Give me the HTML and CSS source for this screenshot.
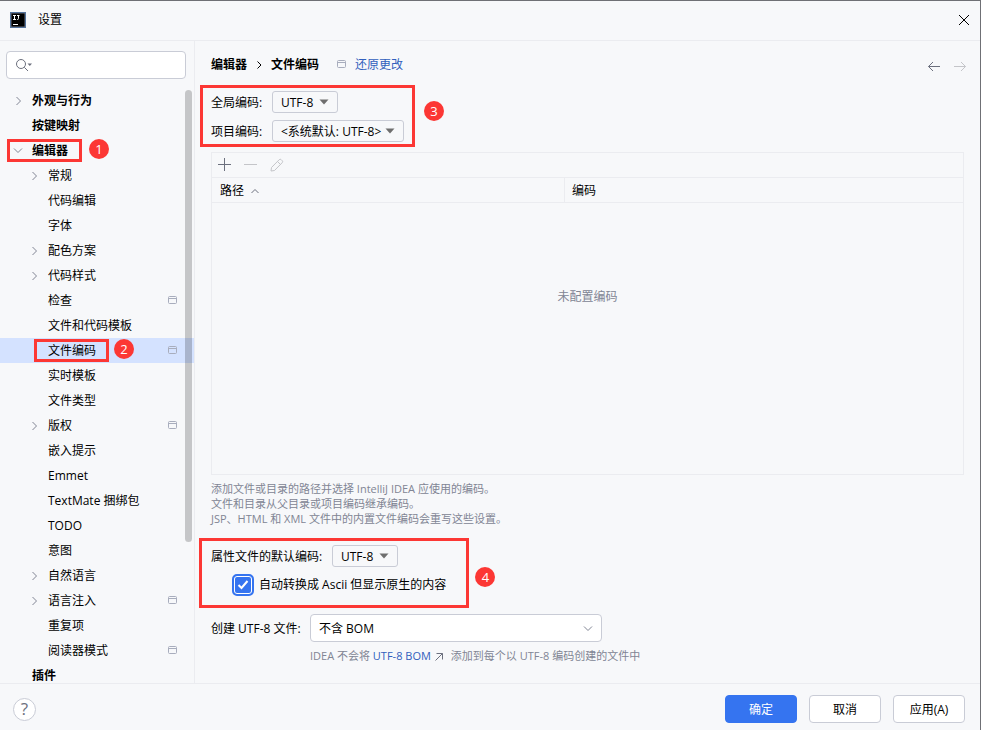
FILE: index.html
```html
<!DOCTYPE html>
<html lang="zh-CN">
<head>
    <meta charset="UTF-8">
    <meta name="viewport" content="width=device-width, initial-scale=1.0">
    <title>设置</title>
    <link rel="stylesheet" href="styles.css">
</head>
<body>
    <!-- shared icons -->
    <svg class="sprite" aria-hidden="true">
        <symbol id="chevron-right" viewBox="0 0 10 10"><path d="M3.500 1l4 4-4 4" /></symbol>
        <symbol id="chevron-down" viewBox="0 0 10 10"><path d="M1 2.500l4 4 4-4" /></symbol>
        <symbol id="project" viewBox="0 0 10 10"><rect x="0.500" y="0.500" width="8" height="7" rx="1" /><path d="M0.500 2.500h8" /></symbol>
        <symbol id="triangle" viewBox="0 0 10 6"><path d="M0.500 0.500h9L5 5.500z" /></symbol>
    </svg>

    <div class="window">
        <header class="titlebar">
            <svg class="logo" width="16" height="16" viewBox="0 0 16 16">
                <rect width="16" height="16" fill="#087cfa" />
                <rect x="1" y="1" width="14" height="14" fill="#000" />
                <path d="M3 3.500h3M4.500 3.500v4M3 7.500h3M7 3.500h2.500M8.500 3.500v3q0 1-1 1H7M3 12.500h5" fill="none" stroke="#fff" />
            </svg>
            <h1>设置</h1>
            <button class="close" aria-label="关闭">
                <svg width="12" height="12" viewBox="0 0 12 12"><path d="M1 1l10 10M11 1L1 11" /></svg>
            </button>
        </header>

        <div class="body">
            <aside class="sidebar">
                <div class="search">
                    <input type="text" aria-label="搜索设置">
                    <svg width="18" height="14" viewBox="0 0 18 14">
                        <circle cx="6" cy="6" r="4.500" />
                        <path d="M9.300 9.300l3.700 3.700" />
                        <path d="M12.500 5.500h4.500l-2.200 2.500z" class="solid" />
                    </svg>
                </div>
                <nav class="tree">
                    <ul>
                        <li class="top"><svg class="icon"><use href="#chevron-right" /></svg><a href="#">外观与行为</a></li>
                        <li class="top"><a href="#">按键映射</a></li>
                        <li class="top marked"><svg class="icon"><use href="#chevron-down" /></svg><a href="#">编辑器</a><span class="badge">1</span></li>
                        <li><svg class="icon"><use href="#chevron-right" /></svg><a href="#">常规</a></li>
                        <li><a href="#">代码编辑</a></li>
                        <li><a href="#">字体</a></li>
                        <li><svg class="icon"><use href="#chevron-right" /></svg><a href="#">配色方案</a></li>
                        <li><svg class="icon"><use href="#chevron-right" /></svg><a href="#">代码样式</a></li>
                        <li><a href="#">检查</a><svg class="project"><use href="#project" /></svg></li>
                        <li><a href="#">文件和代码模板</a></li>
                        <li class="selected marked"><a href="#">文件编码</a><span class="badge">2</span><svg class="project"><use href="#project" /></svg></li>
                        <li><a href="#">实时模板</a></li>
                        <li><a href="#">文件类型</a></li>
                        <li><svg class="icon"><use href="#chevron-right" /></svg><a href="#">版权</a><svg class="project"><use href="#project" /></svg></li>
                        <li><a href="#">嵌入提示</a></li>
                        <li><a href="#">Emmet</a></li>
                        <li><a href="#">TextMate 捆绑包</a></li>
                        <li><a href="#">TODO</a></li>
                        <li><a href="#">意图</a></li>
                        <li><svg class="icon"><use href="#chevron-right" /></svg><a href="#">自然语言</a></li>
                        <li><svg class="icon"><use href="#chevron-right" /></svg><a href="#">语言注入</a><svg class="project"><use href="#project" /></svg></li>
                        <li><a href="#">重复项</a></li>
                        <li><a href="#">阅读器模式</a><svg class="project"><use href="#project" /></svg></li>
                        <li class="top"><a href="#">插件</a></li>
                    </ul>
                    <div class="scrollbar"></div>
                </nav>
            </aside>

            <main class="content">
                <div class="crumbs">
                    <b>编辑器</b>
                    <svg class="separator" width="6" height="8" viewBox="0 0 6 8"><path d="M1.500 0.500L5 4 1.500 7.500" /></svg>
                    <b>文件编码</b>
                    <svg class="project"><use href="#project" /></svg>
                    <a href="#">还原更改</a>
                    <div class="history">
                        <button aria-label="后退"><svg width="14" height="12" viewBox="0 0 14 12"><path d="M13 6.500H1.500M6 2L1.500 6.500 6 11" /></svg></button>
                        <button aria-label="前进" disabled><svg width="14" height="12" viewBox="0 0 14 12"><path d="M1 6.500h11.500M8 2L12.500 6.500 8 11" /></svg></button>
                    </div>
                </div>

                <div class="step">
                    <div class="frame">
                        <div class="field">
                            <label for="global">全局编码:</label>
                            <div class="dropdown">
                                <select id="global"><option>UTF-8</option></select>
                                <svg class="triangle"><use href="#triangle" /></svg>
                            </div>
                        </div>
                        <div class="field">
                            <label for="project-enc">项目编码:</label>
                            <div class="dropdown wide">
                                <select id="project-enc"><option>&lt;系统默认: UTF-8&gt;</option></select>
                                <svg class="triangle"><use href="#triangle" /></svg>
                            </div>
                        </div>
                    </div>
                    <span class="badge">3</span>
                </div>

                <div class="panel">
                    <div class="toolbar">
                        <button aria-label="添加"><svg width="14" height="14" viewBox="0 0 14 14"><path d="M0 6.500h13M6.500 0v13" /></svg></button>
                        <button aria-label="移除" disabled><svg width="14" height="14" viewBox="0 0 14 14"><path d="M0 6.500h13" /></svg></button>
                        <button aria-label="编辑" disabled><svg width="14" height="14" viewBox="0 0 14 14"><path d="M1 13l0.500-3.500 7.700-7.800q1-1 2 0l1 1q1 1 0 2L4.500 12.500zM7.500 3.500l3 3" /></svg></button>
                    </div>
                    <table>
                        <thead>
                            <tr>
                                <th>路径 <svg width="8" height="6" viewBox="0 0 8 6"><path d="M0.500 5L4 1.500 7.500 5" /></svg></th>
                                <th>编码</th>
                            </tr>
                        </thead>
                        <tbody>
                            <tr><td colspan="2">未配置编码</td></tr>
                        </tbody>
                    </table>
                </div>

                <p class="hint">添加文件或目录的路径并选择 IntelliJ IDEA 应使用的编码。<br>文件和目录从父目录或项目编码继承编码。<br>JSP、HTML 和 XML 文件中的内置文件编码会重写这些设置。</p>

                <div class="step properties">
                    <div class="frame">
                        <div class="field">
                            <label for="props">属性文件的默认编码:</label>
                            <div class="dropdown">
                                <select id="props"><option>UTF-8</option></select>
                                <svg class="triangle"><use href="#triangle" /></svg>
                            </div>
                        </div>
                        <label class="check">
                            <span class="tick">
                                <input type="checkbox" checked>
                                <svg width="12" height="10" viewBox="0 0 12 10"><path d="M1.500 5l3 3 6-7" /></svg>
                            </span>
                            自动转换成 Ascii 但显示原生的内容
                        </label>
                    </div>
                    <span class="badge">4</span>
                </div>

                <div class="bom">
                    <label for="bom">创建 UTF-8 文件:</label>
                    <div class="dropdown large">
                        <select id="bom"><option>不含 BOM</option></select>
                        <svg class="icon"><use href="#chevron-down" /></svg>
                    </div>
                    <p class="hint">IDEA 不会将 <a href="#">UTF-8 BOM</a><svg width="8" height="8" viewBox="0 0 8 8"><path d="M0.500 7.500l7-7M1.500 0.500h6v6" /></svg>添加到每个以 UTF-8 编码创建的文件中</p>
                </div>
            </main>
        </div>

        <footer class="footer">
            <button class="help" aria-label="帮助">?</button>
            <button class="btn primary">确定</button>
            <button class="btn">取消</button>
            <button class="btn">应用(A)</button>
        </footer>
    </div>
</body>
</html>
```

FILE: styles.css
```css
*, *::after {
    box-sizing: border-box;
}

body {
    margin: 0;
    font-family: "Open Sans", "Noto Sans CJK SC", sans-serif;
    font-size: 12px;
    line-height: 16px;
    color: #000;
    background: #f7f8fa;
}

svg {
    flex: none;
    fill: none;
    stroke: #6c707e;
}

a {
    color: #315fbd;
    text-decoration: none;
}

button, input, select {
    font: inherit;
    color: inherit;
}

button {
    padding: 0;
    border: none;
    background: none;
}

.sprite {
    position: absolute;
    width: 0;
    height: 0;
}

.icon, .project {
    width: 10px;
    height: 10px;
}

.icon {
    stroke: #818594;
}

.project {
    stroke: #a8adbd;
}

.window {
    display: flex;
    flex-direction: column;
    height: 100vh;
    border-top: 1px solid #6f7075;
    border-right: 1px solid #6f7075;
}

.titlebar {
    display: flex;
    align-items: center;
    height: 40px;
    padding: 0 10px 1px;
    border-bottom: 1px solid #ebecf0;
}

    .titlebar h1 {
        margin: 0 auto 0 12px;
        font-size: 12px;
        font-weight: normal;
    }

.close {
    display: flex;
}

    .close svg {
        stroke: #000;
    }

.body {
    display: flex;
    flex: 1;
    min-height: 0;
}

/* left side */
.sidebar {
    display: flex;
    flex-direction: column;
    flex: none;
    width: 195px;
    border-right: 1px solid #ebecf0;
}

.search {
    position: relative;
    padding: 10px 8px 9px 6px;
}

    .search input {
        display: block;
        width: 100%;
        height: 28px;
        padding: 0 8px 0 32px;
        border: 1px solid #c9ccd6;
        border-radius: 4px;
        background: #fff;
    }

    .search svg {
        position: absolute;
        left: 15px;
        top: 17px;
    }

    .search .solid {
        fill: #6c707e;
        stroke: none;
    }

.tree {
    position: relative;
    flex: 1;
    min-height: 0;
    overflow: hidden;
}

    .tree ul {
        margin: 0;
        padding: 0;
        list-style: none;
    }

    .tree li {
        position: relative;
        display: flex;
        align-items: center;
        height: 25px;
        padding: 0 16px 0 48px;
    }

    .tree a {
        color: #000;
    }

    .tree .top {
        padding-left: 32px;
        font-weight: bold;
    }

    .tree .icon {
        margin: 0 9px 0 -19px;
    }

    .tree .project {
        margin-left: auto;
    }

    .tree .selected {
        background: #d4e2ff;
    }

    .tree .badge {
        margin: 0 0 3px 18px;
    }

    .tree .top .badge {
        margin-left: 21px;
    }

    /* red outline around a tree item */
    .tree .marked::after {
        content: "";
        position: absolute;
        left: 34px;
        top: 1px;
        width: 75px;
        height: 23px;
        border: 3px solid #fc3734;
    }

    .tree .top.marked::after {
        left: 7px;
    }

.scrollbar {
    position: absolute;
    top: 2px;
    right: 2px;
    width: 7px;
    height: 76%;
    border-radius: 4px;
    background: rgba(0, 0, 0, 0.2);
}

.badge {
    flex: none;
    width: 20px;
    height: 20px;
    border-radius: 50%;
    background: #fc3734;
    color: #fff;
    font-size: 13px;
    font-weight: normal;
    line-height: 20px;
    text-align: center;
}

/* right side */
.content {
    display: flex;
    flex-direction: column;
    flex: 1;
    min-width: 0;
    padding: 0 16px 19px;
}

.crumbs {
    display: flex;
    align-items: center;
    flex: none;
    height: 44px;
    padding-top: 3px;
}

    .crumbs .separator {
        margin: 0 9px;
        stroke: #000;
    }

    .crumbs .project {
        margin: 0 8px 0 18px;
    }

.history {
    display: flex;
    gap: 12px;
    margin: 2px -3px 0 auto;
}

    .history button {
        display: flex;
    }

button:disabled svg {
    stroke: #c4c5c9;
}

.step {
    display: flex;
    align-items: center;
    flex: none;
    gap: 9px;
    margin-left: -11px;
}

.frame {
    display: flex;
    flex-direction: column;
    gap: 7px;
    padding: 3px 8px 2px;
    border: 3px solid #fc3734;
}

.step .badge {
    margin-top: -10px;
}

.field {
    display: flex;
    align-items: center;
}

    .field label {
        width: 61px;
        padding-top: 2px;
    }

.dropdown {
    position: relative;
    width: 66px;
}

    .dropdown select {
        display: block;
        appearance: none;
        width: 100%;
        height: 22px;
        padding: 2px 8px 0;
        border: 1px solid #c9ccd6;
        border-radius: 3px;
        background: #f7f8fa;
    }

    .dropdown svg {
        position: absolute;
        right: 9px;
        top: 8px;
        pointer-events: none;
    }

.triangle {
    width: 10px;
    height: 6px;
    fill: #6e6e6e;
    stroke: none;
}

.wide {
    width: 132px;
}

.large {
    width: 292px;
}

    .dropdown.large select {
        height: 28px;
        border-radius: 4px;
        background: #fff;
    }

    .dropdown.large svg {
        top: 10px;
    }

.panel {
    display: flex;
    flex-direction: column;
    flex: 1;
    margin-top: 5px;
    border: 1px solid #ebecf0;
}

.toolbar {
    display: flex;
    gap: 12px;
    height: 25px;
    padding: 0 6px;
    border-bottom: 1px solid #ebecf0;
}

    .toolbar button {
        display: flex;
        align-items: center;
    }

table {
    width: 100%;
    border-collapse: separate;
    border-spacing: 0;
}

th {
    width: 53%;
    height: 25px;
    padding: 2px 7px 0;
    border-bottom: 1px solid #ebecf0;
    font-weight: normal;
    text-align: left;
}

    th:first-child {
        width: 47%;
        padding-left: 8px;
        border-right: 1px solid #ebecf0;
    }

    th svg {
        margin: 0 0 1px 4px;
    }

td {
    padding: 86px 8px 0;
    color: #818594;
    text-align: center;
}

.hint {
    margin: 6px 0 0;
    font-size: 11px;
    line-height: 15px;
    color: #818594;
}

    .hint svg {
        margin: 0 8px 0 4px;
        vertical-align: -1px;
    }

.properties {
    gap: 6px;
    margin: 12px 0 0 -12px;
}

    .properties .frame {
        padding: 4px 20px 9px 9px;
    }

    .properties .field label {
        width: 121px;
    }

    .properties .badge {
        margin-top: 8px;
    }

.check {
    display: flex;
    align-items: center;
    gap: 5px;
    margin-left: 21px;
}

.tick {
    display: grid;
    place-items: center;
}

    .tick input, .tick svg {
        grid-area: 1 / 1;
    }

    .tick input {
        appearance: none;
        width: 22px;
        height: 22px;
        margin: 0;
        border: 2px solid #3574f0;
        border-radius: 5px;
        background: #3574f0;
        box-shadow: inset 0 0 0 1px #fff;
    }

    .tick svg {
        stroke: #fff;
        stroke-width: 2;
        pointer-events: none;
    }

.bom {
    display: grid;
    grid-template-columns: 99px 1fr;
    align-items: center;
    flex: none;
    margin-top: 6px;
    margin-bottom: 1px;
}

    .bom label {
        padding-top: 2px;
    }

    .bom .hint {
        grid-column: 2;
    }

.footer {
    display: flex;
    align-items: center;
    flex: none;
    gap: 12px;
    height: 47px;
    padding: 4px 15px 0 13px;
    border-top: 1px solid #ebecf0;
}

.help {
    width: 23px;
    height: 23px;
    margin-right: auto;
    border: 1px solid #c9ccd6;
    border-radius: 50%;
    background: #fff;
    color: #6c707e;
    font-size: 17px;
    line-height: 20px;
}

.btn {
    width: 72px;
    height: 28px;
    padding-top: 2px;
    border: 1px solid #c9ccd6;
    border-radius: 4px;
    background: #fff;
}

.primary {
    border-color: #3574f0;
    background: #3574f0;
    color: #fff;
}
```
